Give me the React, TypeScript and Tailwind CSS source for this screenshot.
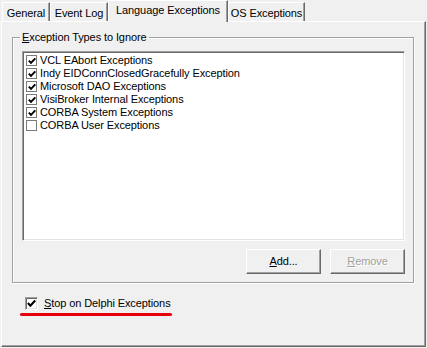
import React from "react";

const font = { fontFamily: '"Liberation Sans", Arial, sans-serif' };

function Check({ size = 11 }: { size?: number }) {
  return (
    <svg width={size - 3} height={size - 3} viewBox="0 0 8 8" className="block">
      <path d="M0.8 3.6 L3 5.9 L7.3 1.4" fill="none" stroke="#000" strokeWidth="1.9" />
    </svg>
  );
}

function ListCheck({ checked }: { checked: boolean }) {
  return (
    <span className="w-[11px] h-[11px] border border-[#7a7a7a] bg-white flex items-center justify-center shrink-0">
      {checked && <Check />}
    </span>
  );
}

function Tab({ label, active, width }: { label: string; active?: boolean; width: number }) {
  return (
    <div
      style={{ width }}
      className={
        active
          ? "h-[22px] -mb-[1px] relative z-10 bg-[#f0f0f0] border-l border-t border-white border-r border-r-[#696969] shadow-[inset_-1px_0_0_#a0a0a0] flex items-start justify-center pt-[3px]"
          : "h-[19px] bg-[#f0f0f0] border-l border-t border-white border-r border-r-[#696969] shadow-[inset_-1px_0_0_#a0a0a0] flex items-start justify-center pt-[4px]"
      }
    >
      <span className="leading-[13px]">{label}</span>
    </div>
  );
}

const items = [
  { label: "VCL EAbort Exceptions", checked: true },
  { label: "Indy EIDConnClosedGracefully Exception", checked: true },
  { label: "Microsoft DAO Exceptions", checked: true },
  { label: "VisiBroker Internal Exceptions", checked: true },
  { label: "CORBA System Exceptions", checked: true },
  { label: "CORBA User Exceptions", checked: false },
];

export default function App() {
  return (
    <div
      style={font}
      className="relative w-[427px] h-[348px] overflow-hidden bg-[#f0f0f0] text-[11px] tracking-[-0.1px] text-black"
    >
      {/* tab strip */}
      <div className="h-[21px] flex items-end pl-[2px]">
        <Tab label="General" width={48} />
        <Tab label="Event Log" width={58} />
        <Tab label="Language Exceptions" width={120} active />
        <Tab label="OS Exceptions" width={77} />
      </div>

      {/* page */}
      <div className="ml-[1px] w-[425px] h-[326px] border border-t-white border-l-white border-r-[#696969] border-b-[#696969] shadow-[inset_-1px_-1px_0_#a0a0a0] px-[10px] pt-[9px]">
        <fieldset className="w-[402px] border border-[#a0a0a0] shadow-[inset_1px_1px_0_#fff,1px_1px_0_#fff] pl-[9px] pr-[8px] pt-[7px] pb-[8px]">
          <legend className="-ml-[2px] px-[2px] bg-[#f0f0f0] leading-[13px]">
            <span className="underline">E</span>xception Types to Ignore
          </legend>
          <div className="w-[383px] h-[190px] bg-white border border-t-[#a0a0a0] border-l-[#a0a0a0] border-r-white border-b-white shadow-[inset_1px_1px_0_#696969,inset_-1px_-1px_0_#e3e3e3] pt-[2px] pl-[3px]">
            {items.map((it) => (
              <div key={it.label} className="h-[13px] flex items-center gap-[3px]">
                <ListCheck checked={it.checked} />
                <span className="leading-[13px]">{it.label}</span>
              </div>
            ))}
          </div>
          <div className="mt-[8px] flex justify-end gap-[9px]">
            <button className="w-[75px] h-[25px] bg-[#f0f0f0] border border-t-white border-l-white border-r-[#696969] border-b-[#696969] shadow-[inset_-1px_-1px_0_#a0a0a0]">
              <span className="underline">A</span>dd...
            </button>
            <button
              disabled
              className="w-[75px] h-[25px] bg-[#f0f0f0] border border-t-white border-l-white border-r-[#696969] border-b-[#696969] shadow-[inset_-1px_-1px_0_#a0a0a0] text-[#a0a0a0] [text-shadow:1px_1px_0_#fff]"
            >
              <span className="underline">R</span>emove
            </button>
          </div>
        </fieldset>

        <div className="mt-[14px] pl-[13px] flex items-center">
          <span className="w-[13px] h-[13px] bg-white border border-t-[#a0a0a0] border-l-[#a0a0a0] border-r-white border-b-white shadow-[inset_1px_1px_0_#696969,inset_-1px_-1px_0_#e3e3e3] flex items-center justify-center">
            <Check size={12} />
          </span>
          <span className="ml-[6px] leading-[13px]">
            <span className="underline">S</span>top on Delphi Exceptions
          </span>
        </div>
      </div>

      {/* red annotation marks */}
      <div className="absolute left-[108px] top-[17px] w-[120px] h-[3px] rounded-full bg-[#e8000b]" />
      <div className="absolute left-[20px] top-[313px] w-[152px] h-[3px] rounded-full bg-[#e8000b]" />
    </div>
  );
}
